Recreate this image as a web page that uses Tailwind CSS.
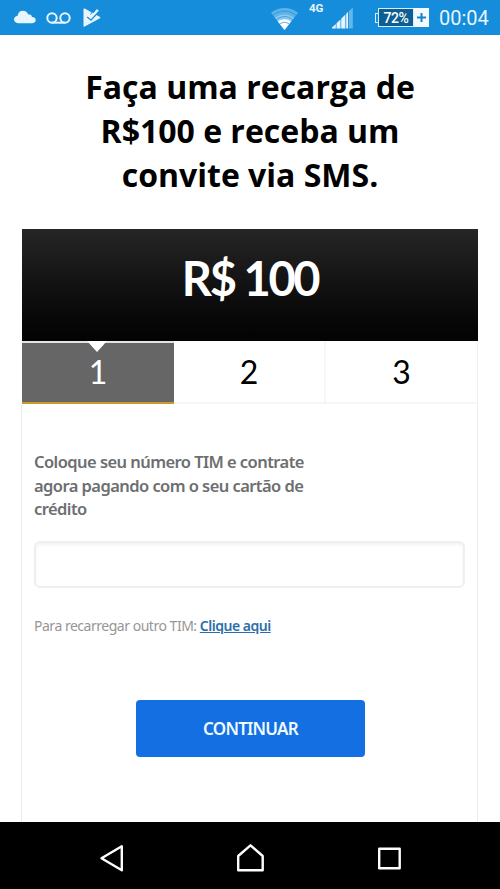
<!DOCTYPE html>
<html lang="pt-BR">
<head>
  <meta charset="UTF-8">
  <meta name="viewport" content="width=device-width, initial-scale=1.0">
  <title>Recarga TIM</title>
  <script src="https://cdn.jsdelivr.net/npm/@tailwindcss/browser@4"></script>
</head>
<body class="bg-white">
  <div class="flex h-[889px] w-[500px] flex-col overflow-hidden bg-white font-['Noto_Sans',sans-serif]">

    <!-- Status bar -->
    <header class="flex h-[35px] shrink-0 items-center bg-[#158ddb] pl-3.5 font-['Roboto',sans-serif] text-[#e8f5fd]">
      <svg class="h-[35px] w-[22px]" viewBox="14 0 22 35" fill="currentColor">
        <path d="M18 23.200c-2.200 0-4-1.500-4-3.600s1.500-3.700 3.600-3.900c.3-2.900 2.500-4.900 5.200-4.900 2.600 0 4.600 1.500 5.500 3.800.5-.2 1-.2 1.400-.1 1.300.2 2.100 1.200 2.200 2.500 2.300.1 3.800 1.200 3.800 3.100 0 1.800-1.300 3.100-3.200 3.100z"/>
      </svg>
      <svg class="ml-2.5 h-[35px] w-[25px]" viewBox="46 0 25 35" fill="none" stroke="currentColor" stroke-width="2">
        <circle cx="52" cy="18" r="4.700"/>
        <circle cx="65" cy="18" r="4.700"/>
        <path d="M52 22.700h13"/>
      </svg>
      <svg class="ml-3 h-[35px] w-[18px]" viewBox="83 0 18 35">
        <path d="M84.300 9.300l15.300 8.300-15.300 8.300z" fill="currentColor" stroke="currentColor" stroke-width="1.600" stroke-linejoin="round"/>
        <path d="M87.500 15l3.500 3 7-8" fill="none" stroke="currentColor" stroke-width="2.800"/>
        <path d="M87.200 17l3.800 3.200 8-8.700" fill="none" stroke="#158ddb" stroke-width="1.300"/>
        <path d="M90.500 14.500l3-4" fill="none" stroke="#158ddb" stroke-width="1"/>
      </svg>

      <svg class="ml-[170px] h-[35px] w-[27px]" viewBox="271 0 27 35">
        <path d="M284.500 30L271 12.800c7.500-6.400 19.500-6.400 27 0z" fill="#5cb3e8"/>
        <path d="M284.500 30l-9.500-12.200c5.500-4.500 13.500-4.500 19 0z" fill="#8acaf0"/>
        <path d="M284.500 30l-6.500-8.500c4-3.100 9-3.100 13 0z" fill="#fff"/>
        <path d="M272.800 15.200c7-5.500 16.400-5.500 23.400 0M276.200 19.800c5-4.200 11.600-4.200 16.600 0M279.500 24.200c3.200-2.400 6.800-2.400 10 0" fill="none" stroke="#158ddb" stroke-width=".7"/>
      </svg>
      <span class="ml-[11px] mb-[18px] w-[16px] text-[11.500px] leading-none font-bold">4G</span>
      <svg class="ml-[7px] h-[35px] w-[22px]" viewBox="332 0 22 35" fill="#e4f4fd">
        <path d="M332 28.500v-1l3.800-3.400v4.400zM336.500 28.500v-5.200l4-3.800v9zM341.200 28.500v-9.700l4.200-4.200v13.900z"/>
        <path d="M346.200 28.500V13.800l1.800-1.900v16.600z"/>
        <path d="M348.800 28.500V11.200l4-3.700v21z" fill="#62b6ea"/>
      </svg>
      <div class="ml-[21px] flex items-center">
        <div class="h-2.5 w-[3px] border-y border-l border-[#d5eefb]"></div>
        <div class="flex h-[19px] w-[36px] items-center justify-center border border-[#d5eefb] bg-[#0d5e93] text-[14px] leading-none font-medium tracking-[-0.4px] text-white">72%</div>
        <div class="flex h-[19px] w-[15px] items-center justify-center bg-[#f2faff]">
          <svg class="size-[9px]" viewBox="0 0 9 9" stroke="#1682c8" stroke-width="2"><path d="M4.500 0v9M0 4.500h9"/></svg>
        </div>
      </div>
      <span class="ml-[10px] text-[20px] leading-none">00:04</span>
    </header>

    <h1 class="mt-[29.500px] text-center font-['Open_Sans',sans-serif] text-[32px] leading-[44.400px] font-bold text-black">
      Faça uma recarga de<br>R$100 e receba um<br>convite via SMS.
    </h1>

    <!-- Recharge card -->
    <main class="mx-[22px] mt-[31.300px] flex min-h-0 flex-1 flex-col">
      <div class="flex h-[112px] shrink-0 justify-center bg-linear-to-b from-[#262626] to-[#030303] pt-4">
        <span class="font-['Lato',sans-serif] text-[47px] leading-[66px] font-bold tracking-[-2.400px] text-white">R$ 100</span>
      </div>

      <div class="grid h-[63px] shrink-0 grid-cols-3 text-center font-['Lato',sans-serif] text-[32px] leading-[58px] text-black">
        <div class="relative border-t-2 border-b-2 border-t-[#dfe5e5] border-b-[#c79b32] bg-[#666] text-white">
          <svg class="absolute -top-0.5 left-[65px] h-[11px] w-5" viewBox="0 0 20 11" fill="#fff"><path d="M0 0h20L10 11z"/></svg>
          1
        </div>
        <div class="border-t-2 border-r-2 border-b-2 border-t-white border-r-[#f6f6f6] border-b-[#f6f6f6]">2</div>
        <div class="border-t-2 border-r border-b-2 border-t-white border-r-[#f0f0f0] border-b-[#f6f6f6]">3</div>
      </div>

      <div class="-ml-px flex flex-1 flex-col border-x border-[#ececec] px-3">
        <p class="mt-[46px] text-[16.500px] leading-[23.700px] font-semibold tracking-[-0.560px] text-[#6c6e70]">
          Coloque seu número TIM e contrate<br>agora pagando com o seu cartão de<br>crédito
        </p>
        <input type="tel" class="mt-[20px] h-[47px] w-[431px] rounded-md border-2 border-[#efefef] px-3 shadow-[inset_0_2px_3px_rgba(0,0,0,0.05)]">
        <p class="mt-[27px] text-[14px] leading-[22px] tracking-[-0.480px] text-[#969696]">
          Para recarregar outro TIM: <a href="#" class="font-semibold text-[#2a6fab] underline">Clique aqui</a>
        </p>
        <button class="mt-[63px] ml-[102px] h-[57px] w-[229px] rounded bg-[#136fe2] text-[17px] font-semibold tracking-[-0.750px] text-[#f0faff]">CONTINUAR</button>
      </div>
    </main>

    <!-- Navigation bar -->
    <nav class="h-[67px] shrink-0 bg-black">
      <svg class="h-[67px] w-[500px]" viewBox="0 822 500 67" fill="none" stroke="#fff" stroke-width="2.400" stroke-linejoin="round">
        <path d="M101.500 858.300l20.300-12v24z"/>
        <path d="M250.500 845.300l12.200 10.700v14.200h-24.500V856z"/>
        <path d="M379.200 848.700h20.500v19.500h-20.500z"/>
      </svg>
    </nav>
  </div>
</body>
</html>
